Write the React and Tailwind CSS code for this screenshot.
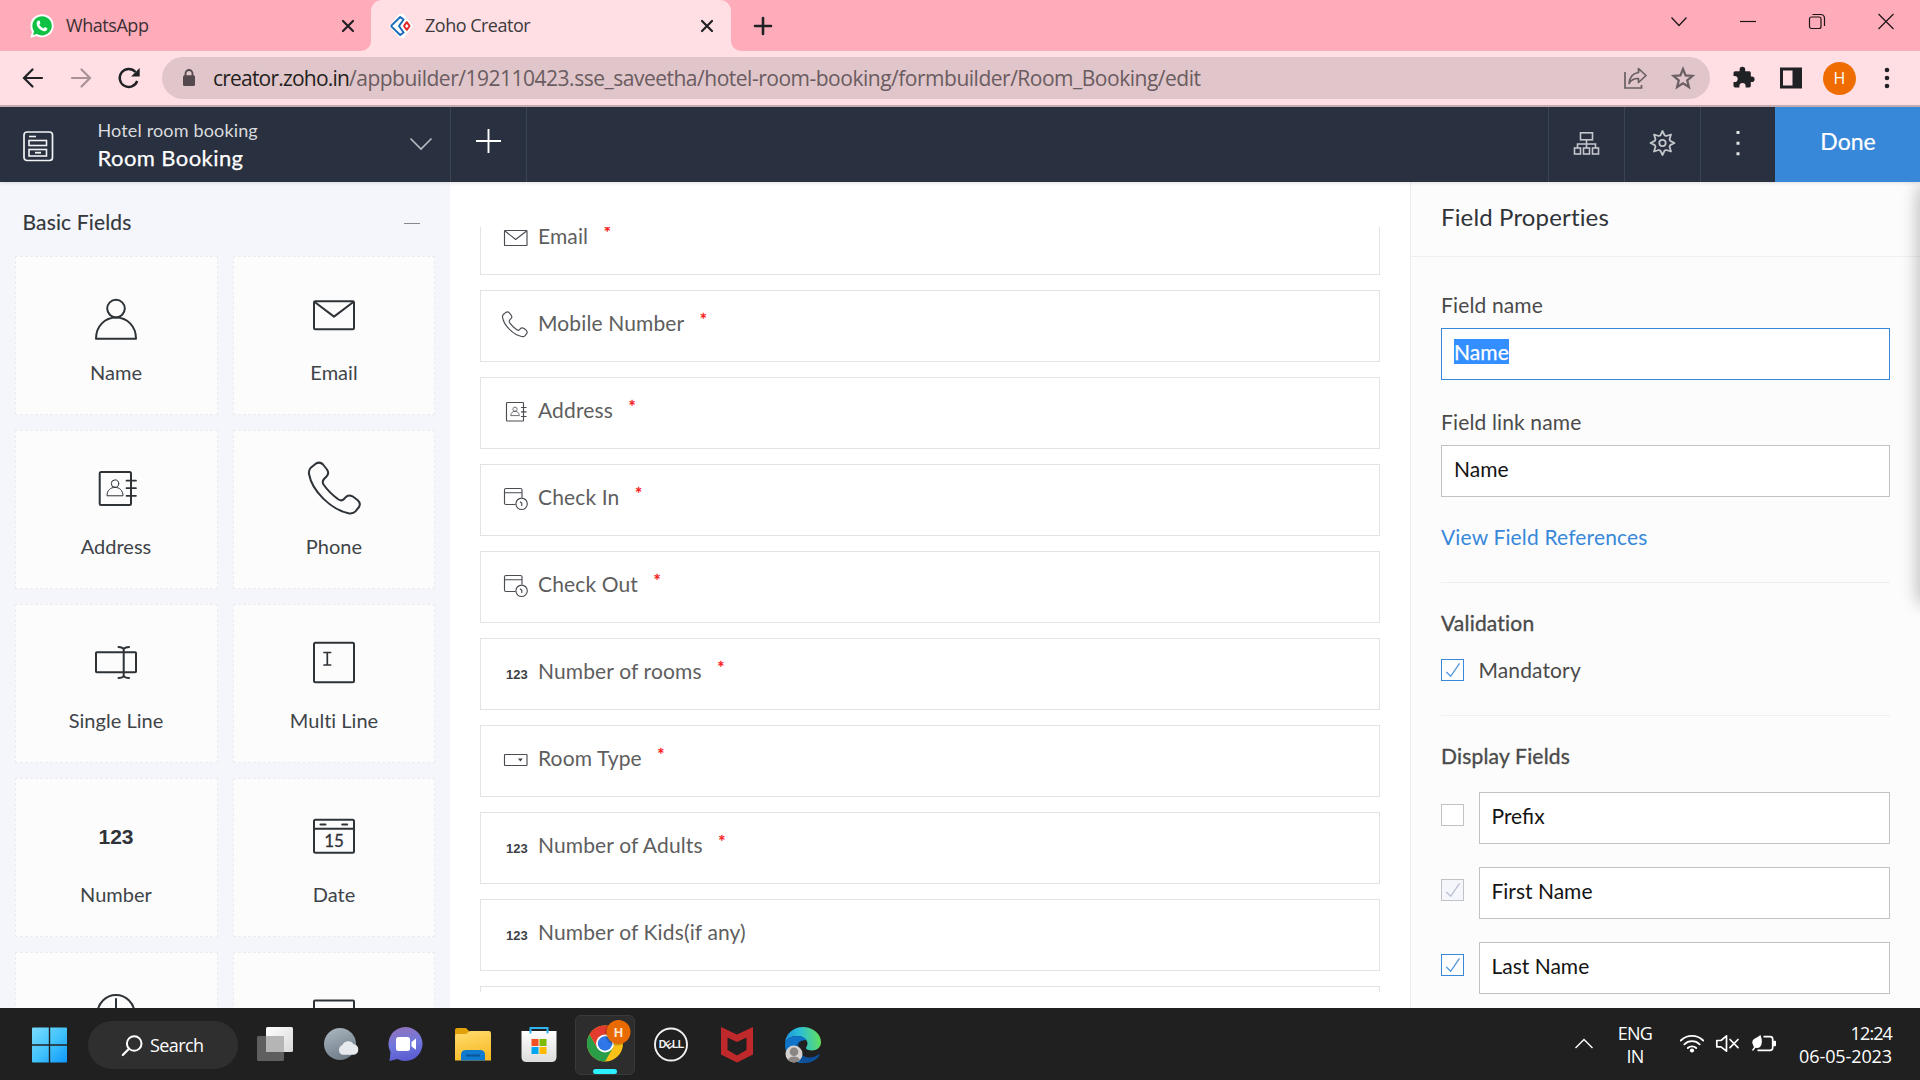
import React from 'react';

const PHONE =
  'M12 4.5C15 3 17.5 3.8 19 5.5L23 10.5C25 13.5 24.5 15.5 22.5 17.5L20 20C18.3 22 18.3 23.5 19.5 25.5C24 32 29 36.5 34.5 40.5C37 42 38.5 41.8 40 40L41.5 38.3C43.5 36 46 36 48.5 37.3L53.5 41C56 43.2 56.5 45.5 55 48L51.5 52.3C49.5 54.5 47.5 54.8 44.5 54.3C27 50.5 8 32 5 15C4.6 12.5 5 11 6.5 9Z';

function Svg({ w = 24, h = w, className = '', children }) {
  return (
    <svg width={w} height={h} viewBox={`0 0 ${w} ${h}`} fill="none" className={`shrink-0 ${className}`}>
      {children}
    </svg>
  );
}

/* ---------- Browser chrome ---------- */

function TabClose() {
  return (
    <Svg w={14}>
      <path d="M2 2L12 12M12 2L2 12" stroke="#202124" strokeWidth="2.2" strokeLinecap="round" />
    </Svg>
  );
}

function WhatsAppIcon() {
  return (
    <Svg w={24} h={24}>
      <path d="M12 0.3C18.8 0.3 23.7 5.4 23.7 11.8S18.6 23.3 12 23.3C10 23.3 8.2 22.8 6.6 22L0.3 23.8L2 17.9C0.9 16.1 0.4 14 0.4 11.8C0.4 5.4 5.4 0.3 12 0.3Z" fill="#fff" />
      <path d="M12 2.2C17.6 2.2 21.8 6.5 21.8 11.8S17.5 21.4 12 21.4C10.1 21.4 8.4 20.9 6.9 20L3 21.1L4.1 17.4C3 15.8 2.4 13.9 2.4 11.8C2.4 6.5 6.6 2.2 12 2.2Z" fill="#0ec143" />
      <path d="M8.4 6.6C9.3 6.3 9.7 6.8 10.2 8.4C10.6 9.5 9.8 9.9 9.3 10.6C10.2 12.4 11.5 13.6 13.4 14.4C14.2 13.7 14.6 12.9 15.5 13.3C17.6 14.3 17.5 14.5 17.1 15.6C16.5 17.1 14.9 17.6 13.3 17.1C9.7 16 7.4 13.5 6.7 10.5C6.4 8.8 7.2 7 8.4 6.6Z" fill="#fff" />
    </Svg>
  );
}

function ZohoIcon() {
  return (
    <Svg w={24} h={24}>
      <path d="M10.5 0.5L14.5 0.5L23.5 12L14.5 23.5H10.5L0.5 12Z" fill="#fff" stroke="#fff" strokeLinejoin="round" />
      <path d="M11.2 3L14.6 5.5L10 12L14.6 18.5L11.2 21L2.6 12.6Q2.2 12 2.6 11.4Z" stroke="#1b6cb8" strokeWidth="2" strokeLinejoin="round" />
      <path d="M17.8 8.2L20.6 12L17.8 15.8L15 12Z" stroke="#e42527" strokeWidth="2" strokeLinejoin="round" />
    </Svg>
  );
}

function TabStrip() {
  return (
    <div className="flex h-[51px] bg-[#ffacba]">
      <div className="flex w-[371px] items-center pl-[30px] pr-[16px]">
        <WhatsAppIcon />
        <span className="ml-[12px] grow text-[18px] tracking-[-0.45px] text-[#3b3034]">WhatsApp</span>
        <TabClose />
      </div>
      <div className="relative flex w-[360px] items-center rounded-t-[11px] bg-[#ffdee4] pl-[18px] pr-[17px]">
        <Svg w={10} className="absolute bottom-0 left-[-10px]">
          <path d="M0 10A10 10 0 0 0 10 0V10Z" fill="#ffdee4" />
        </Svg>
        <Svg w={10} className="absolute bottom-0 right-[-10px]">
          <path d="M10 10A10 10 0 0 1 0 0V10Z" fill="#ffdee4" />
        </Svg>
        <ZohoIcon />
        <span className="ml-[12px] grow text-[18px] tracking-[-0.5px] text-[#3c3a3c]">Zoho Creator</span>
        <TabClose />
      </div>
      <div className="flex grow items-center pl-[22px]">
        <Svg w={20}>
          <path d="M10 2V18M2 10H18" stroke="#202124" strokeWidth="2.6" strokeLinecap="round" />
        </Svg>
      </div>
      <div className="flex gap-[45px] pr-[22px] pt-[9px]">
        <Svg w={24}>
          <path d="M4.5 8.5L12 16.5L19.5 8.5" stroke="#1c1416" strokeWidth="1.2" />
        </Svg>
        <Svg w={24}>
          <path d="M4 12.5H20" stroke="#1c1416" strokeWidth="1.2" />
        </Svg>
        <Svg w={24}>
          <rect x="4.5" y="8" width="11.5" height="11.5" rx="2" stroke="#1c1416" strokeWidth="1.2" />
          <path d="M7.5 5.5H15.5Q19.5 5.5 19.5 9.5V17" stroke="#1c1416" strokeWidth="1.2" />
        </Svg>
        <Svg w={24}>
          <path d="M4.5 5L19.5 20M19.5 5L4.5 20" stroke="#1c1416" strokeWidth="1.2" />
        </Svg>
      </div>
    </div>
  );
}

function AddressBar() {
  return (
    <div className="flex h-[56px] items-center border-b-2 border-[#c8afb4] bg-[#ffdee4] pl-[20px]">
      <Svg w={26}>
        <path d="M22 13H4.5M12.5 4.5L4 13L12.5 21.5" stroke="#202124" strokeWidth="2.2" strokeLinecap="round" />
      </Svg>
      <Svg w={26} className="ml-[22px]">
        <path d="M4 13H21.5M13.5 4.5L22 13L13.5 21.5" stroke="#a99398" strokeWidth="2.2" strokeLinecap="round" />
      </Svg>
      <Svg w={26} className="ml-[22px]">
        <path d="M21.2 16A9 9 0 1 1 19.5 7" stroke="#202124" strokeWidth="2.4" />
        <path d="M23.7 3V11.6H15.1Z" fill="#202124" />
      </Svg>
      <div className="ml-[20px] flex h-[42px] w-[1548px] items-center rounded-full bg-[#e0c5ca] pl-[20px] pr-[15px]">
        <Svg w={14} h={20}>
          <path d="M3.5 8V5.5A3.5 3.5 0 0 1 10.5 5.5V8" stroke="#54494d" strokeWidth="1.8" />
          <rect x="1" y="7.3" width="12" height="10.7" rx="1.5" fill="#54494d" />
        </Svg>
        <span className="ml-[17px] mt-[2px] whitespace-nowrap text-[21px] tracking-[-0.49px] text-[#6a5c60]">
          <span className="tracking-[-0.8px] text-[#231f20]">creator.zoho.in</span>
          /appbuilder/192110423.sse_saveetha/hotel-room-booking/formbuilder/Room_Booking/edit
        </span>
        <div className="ml-auto flex gap-[24px]">
          <Svg w={24}>
            <path d="M2 6V22H18.5V19" stroke="#6a5f62" strokeWidth="1.7" />
            <path d="M15.5 2.5L23 9.5L15.5 16.5V12.5Q9 12.2 6 17.5Q7 7.5 15.5 6.5Z" stroke="#6a5f62" strokeWidth="1.7" strokeLinejoin="round" />
          </Svg>
          <Svg w={24}>
            <path d="M12 3L14.6 9.4L21.5 9.9L16.2 14.3L17.9 21L12 17.3L6.1 21L7.8 14.3L2.5 9.9L9.4 9.4Z" stroke="#6a5f62" strokeWidth="2.2" />
          </Svg>
        </div>
      </div>
      <Svg w={26} className="ml-[21px]">
        <path d="M2.5 9Q2.5 7.3 4.2 7.3H8.6V5.6A2.8 2.8 0 0 1 14.2 5.6V7.3H18.2Q19.8 7.3 19.8 9V12.4H20.8A2.8 2.8 0 0 1 20.8 18H19.8V21.8Q19.8 23.5 18.2 23.5H14.6V22.2A3.1 3.1 0 0 0 8.4 22.2V23.5H4.2Q2.5 23.5 2.5 21.8V18.1H3.6A3.1 3.1 0 0 0 3.6 11.9H2.5Z" fill="#202124" transform="translate(0 -1)" />
      </Svg>
      <Svg w={24} className="ml-[22px]">
        <path d="M1 1.5H23V22.5H1ZM4 4.5V19.5H13.5V4.5Z" fill="#202124" fillRule="evenodd" />
      </Svg>
      <div className="ml-[20px] flex size-[33px] items-center justify-center rounded-full bg-[#ef6c00] text-[16px] text-white">H</div>
      <Svg w={24} className="ml-[19px]">
        <circle cx="12" cy="4" r="2.3" fill="#202124" />
        <circle cx="12" cy="12" r="2.3" fill="#202124" />
        <circle cx="12" cy="20" r="2.3" fill="#202124" />
      </Svg>
    </div>
  );
}

/* ---------- Application header ---------- */

function AppHeader() {
  return (
    <div className="relative z-10 flex h-[75px] bg-[#29303f] font-['Lato',sans-serif] shadow-[0_1px_4px_rgba(0,0,0,0.12)]">
      <div className="flex w-[451px] items-center border-r border-[#3b4453] pl-[22px] pr-[17px]">
        <Svg w={32} className="mt-[3px]">
          <rect x="2" y="2" width="28.5" height="28.5" rx="3" stroke="#f1f2f4" strokeWidth="1.7" />
          <path d="M7 6.5H14" stroke="#f1f2f4" strokeWidth="1.6" />
          <rect x="7" y="10.5" width="17.5" height="5" stroke="#f1f2f4" strokeWidth="1.6" />
          <rect x="7" y="19.5" width="17.5" height="6.5" stroke="#f1f2f4" strokeWidth="1.6" />
          <path d="M13 22.7H19" stroke="#f1f2f4" strokeWidth="1.8" />
        </Svg>
        <div className="ml-[43.5px] mt-[-2px] grow">
          <div className="text-[18px] leading-[28px] tracking-[0.15px] text-[#d9dbde]">Hotel room booking</div>
          <div className="text-[22px] leading-[28px] tracking-[0.42px] text-white [-webkit-text-stroke:0.25px_#fff]">Room Booking</div>
        </div>
        <Svg w={24} className="mt-[-2px]">
          <path d="M1.5 6.5L12 17L22.5 6.5" stroke="#b8bbc1" strokeWidth="1.6" />
        </Svg>
      </div>
      <div className="flex w-[76px] justify-center border-r border-[#3b4453] pt-[20px]">
        <Svg w={28}>
          <path d="M13.5 2V26M1 14H26" stroke="#fff" strokeWidth="1.9" />
        </Svg>
      </div>
      <div className="ml-auto flex">
        <div className="flex w-[76px] justify-center border-l border-[#3b4453] pt-[23px]">
          <Svg w={28}>
            <g stroke="#c3c6cb" strokeWidth="1.6" transform="translate(-0.5 0)">
              <rect x="8" y="2.8" width="12" height="7" />
              <path d="M14 10V18M5 18V14H23V18" />
              <rect x="2" y="18" width="6" height="6" />
              <rect x="11" y="18" width="6" height="6" />
              <rect x="20" y="18" width="6" height="6" />
            </g>
          </Svg>
        </div>
        <div className="flex w-[76px] justify-center border-l border-[#3b4453] pt-[22px]">
          <Svg w={28}>
            <path
              d="M14 2L16.1 6.3L17.8 7L22.5 5.5L21 10.2L21.7 11.9L26 14L21.7 16.1L21 17.8L22.5 22.5L17.8 21L16.1 21.7L14 26L11.9 21.7L10.2 21L5.5 22.5L7 17.8L6.3 16.1L2 14L6.3 11.9L7 10.2L5.5 5.5L10.2 7L11.9 6.3Z"
              stroke="#c3c6cb"
              strokeWidth="1.8"
              strokeLinejoin="round"
              transform="translate(-0.5 0)"
            />
            <circle cx="13.5" cy="14" r="3.2" stroke="#c3c6cb" strokeWidth="1.8" />
          </Svg>
        </div>
        <div className="flex w-[75px] justify-center border-l border-[#3b4453] pt-[22px]">
          <Svg w={28}>
            <path d="M12.5 2H15.5V5H12.5ZM12.5 12.8H15.5V15.8H12.5ZM12.5 23.3H15.5V26.3H12.5Z" fill="#e4e5e7" />
          </Svg>
        </div>
        <div className="flex w-[145px] justify-center bg-[#3888da] pl-px pt-[19px] text-[23px] leading-[30px] text-white [-webkit-text-stroke:0.2px_#fff]">Done</div>
      </div>
    </div>
  );
}

/* ---------- Basic Fields palette ---------- */

const BIG = {
  name: (
    <>
      <circle cx="30" cy="23.6" r="8.8" />
      <path d="M10 53.8C10 41 19 32.6 30 32.6S50 41 50 53.8Z" />
    </>
  ),
  email: (
    <>
      <rect x="10" y="16.2" width="40" height="28" rx="1.2" />
      <path d="M11 17.2L30 31.6L49 17.2" />
    </>
  ),
  address: (
    <>
      <rect x="13.7" y="13" width="31.3" height="33" rx="1.5" />
      <path d="M40.5 21.7H50M40.5 29.2H50M40.5 36.8H50" strokeWidth="1.7" />
      <g strokeWidth="1">
        <circle cx="29" cy="24.6" r="3.7" />
        <path d="M21 36.4C21 31.4 24.5 28.4 29 28.4S37 31.4 37 36.4Z" />
      </g>
    </>
  ),
  phone: <path d={PHONE} />,
  single: (
    <>
      <rect x="10" y="19.3" width="40" height="20" rx="0.8" />
      <path d="M37.7 16V43M32.5 13.9Q36.5 13.9 37.7 16Q38.9 13.9 43 13.9M32.5 45Q36.5 45 37.7 43Q38.9 45 43 45" />
    </>
  ),
  multi: (
    <>
      <rect x="10" y="9.7" width="40" height="39.6" rx="1.5" />
      <path d="M23.3 19.5V32M20 19.5H26.6M20 32H26.6" strokeWidth="1.7" />
    </>
  ),
  number: (
    <text x="30" y="37" textAnchor="middle" fontSize="21" fontWeight="700" fontFamily="Liberation Sans" fill="#2e3338" stroke="none">
      123
    </text>
  ),
  date: (
    <>
      <rect x="10" y="12.8" width="40" height="33" rx="1.5" />
      <path d="M10 21.8H50M16.5 17.6H21.5M38.2 17.6H43.2" />
      <text x="30" y="39.8" textAnchor="middle" fontSize="17" fontFamily="Lato" fill="#2e3338" stroke="#2e3338" strokeWidth="0.3">
        15
      </text>
    </>
  ),
  time: (
    <>
      <circle cx="30" cy="32.5" r="18.5" />
      <path d="M30 18V32.5" />
    </>
  ),
  box: <rect x="10" y="19.5" width="40" height="24" rx="1" />,
};

const PALETTE = [
  ['name', 'Name'],
  ['email', 'Email'],
  ['address', 'Address'],
  ['phone', 'Phone'],
  ['single', 'Single Line'],
  ['multi', 'Multi Line'],
  ['number', 'Number'],
  ['date', 'Date'],
  ['time', ''],
  ['box', ''],
];

function Sidebar() {
  return (
    <div className="flex w-[450px] shrink-0 flex-col overflow-hidden bg-[#f4f6fb] pl-[15px] pr-[15px]">
      <div className="flex h-[74px] shrink-0 items-center pl-[7.5px] pr-[15px] pt-[6px]">
        <span className="grow text-[21px] tracking-[0.15px] text-[#33363a] [-webkit-text-stroke:0.15px_#33363a]">Basic Fields</span>
        <div className="mt-[2px] h-px w-[16px] bg-[#85888c]" />
      </div>
      <div className="grid shrink-0 grid-cols-[203px_202px] gap-[15px]">
        {PALETTE.map(([icon, label]) => (
          <div key={icon} className="flex h-[159px] flex-col items-center border border-dashed border-[#ececee] bg-[#fcfcfd] pt-[28px] odd:pr-px">
            <Svg w={60}>
              <g stroke="#2e3338" strokeWidth="2" strokeLinejoin="round" strokeLinecap="round">
                {BIG[icon]}
              </g>
            </Svg>
            <span className="mt-[15px] text-[20px] leading-[24px] tracking-[0.02px] text-[#404448]">{label}</span>
          </div>
        ))}
      </div>
    </div>
  );
}

/* ---------- Form canvas ---------- */

const SMALL = {
  email: (
    <>
      <rect x="3.5" y="8.5" width="22.5" height="15" rx="0.6" />
      <path d="M4 9L14.7 17.5L25.5 9" />
    </>
  ),
  phone: <path d={PHONE} transform="translate(-0.9 1.2) scale(0.485)" strokeWidth="2.4" />,
  address: (
    <>
      <rect x="5.5" y="6.5" width="17" height="18.5" rx="0.8" />
      <path d="M20 11.5H25.5M20 15.8H25.5M20 20.5H25.5" />
      <g strokeWidth="0.8">
        <circle cx="14" cy="13.2" r="2.1" />
        <path d="M9.7 19.6C9.7 17 11.5 15.4 14 15.4S18.3 17 18.3 19.6Z" />
      </g>
    </>
  ),
  datetime: (
    <>
      <path d="M14.5 21.5H5Q3.5 21.5 3.5 20V7Q3.5 5.5 5 5.5H19.5Q21 5.5 21 7V14.5M3.5 9.7H21" />
      <circle cx="20.6" cy="20.8" r="5.7" />
      <path d="M19 18.8L20.8 20.3V23" />
    </>
  ),
  number: (
    <text x="15.8" y="22" textAnchor="middle" fontSize="13" fontWeight="700" fontFamily="Liberation Sans" fill="#3d4146" stroke="none">
      123
    </text>
  ),
  dropdown: (
    <>
      <rect x="3.5" y="10.5" width="22.5" height="11" rx="0.4" />
      <path d="M17 14.6H21.8L19.4 17.4Z" fill="#3d4146" stroke="none" />
    </>
  ),
};

const FIELDS = [
  ['email', 'Email', true],
  ['phone', 'Mobile Number', true],
  ['address', 'Address', true],
  ['datetime', 'Check In', true],
  ['datetime', 'Check Out', true],
  ['number', 'Number of rooms', true],
  ['dropdown', 'Room Type', true],
  ['number', 'Number of Adults', true],
  ['number', 'Number of Kids(if any)', false],
];

function Canvas() {
  return (
    <div className="grow bg-white pb-[16px] pl-[30px] pr-[30px] pt-[45px]">
      <div className="flex h-full flex-col overflow-hidden">
        <div className="mt-[-24px] flex flex-col gap-[15px]">
          {FIELDS.map(([icon, label, required]) => (
            <div key={label} className="flex h-[72px] shrink-0 border border-[#e3e3e4] bg-white pl-[20px] pt-[18px]">
              <Svg w={30}>
                <g stroke="#4a4d52" strokeWidth="1.15" strokeLinejoin="round">
                  {SMALL[icon]}
                </g>
              </Svg>
              <span className="ml-[7px] mt-[2px] text-[21px] leading-[24px] tracking-[0.13px] text-[#5e5e5e]">{label}</span>
              {required && (
                <span className="ml-[15.5px] mt-[-1px] text-[17px] leading-[24px] text-[#fb0f0f] [-webkit-text-stroke:0.3px_#fb0f0f]">*</span>
              )}
            </div>
          ))}
          <div className="h-[72px] shrink-0 border border-[#e3e3e4] bg-white" />
        </div>
      </div>
    </div>
  );
}

/* ---------- Field properties ---------- */

function Checkbox({ state }) {
  const tone = { on: 'border-[#3888da] bg-white', off: 'border-[#c0c2c8] bg-white', locked: 'border-[#c0c2c8] bg-[#f4f6fb]' }[state];
  return (
    <div className={`flex h-[22px] w-[23px] shrink-0 items-center justify-center border ${tone}`}>
      {state !== 'off' && (
        <Svg w={18}>
          <path d="M2.3 11L6.7 15.3L15.5 2.3" stroke={state === 'on' ? '#4f97e2' : '#b9bfd2'} strokeWidth="1.3" />
        </Svg>
      )}
    </div>
  );
}

const INPUT = 'flex h-[52px] items-center border bg-white pb-[5px] text-[21px] leading-[25px] text-[#141414]';

function Properties() {
  return (
    <div className="relative flex w-[510px] shrink-0 flex-col overflow-hidden border-l border-[#ebecf2] bg-[#fcfcfc] text-[#4a4a4a]">
      <div className="absolute right-[-14px] top-[6px] h-[414px] w-[14px] rounded-full shadow-[0_0_16px_4px_rgba(0,0,0,0.22)]" />
      <div className="h-[75px] border-b border-[#eeeff0] pl-[30px] pt-[20px] text-[24px] leading-[30px] tracking-[0.15px] text-[#303338]">
        Field Properties
      </div>
      <div className="flex flex-col pl-[30px] pr-[30px] pt-[36px] text-[21px] leading-[24px]">
        <span className="tracking-[0.14px]">Field name</span>
        <div className={`mt-[11px] border-[#3888da] pl-[12px] ${INPUT}`}>
          <span className="w-[55px] bg-[#338fff] tracking-[0.1px] text-white [-webkit-text-stroke:0.25px_#fff]">Name</span>
        </div>
        <span className="mt-[30px] tracking-[0.14px]">Field link name</span>
        <div className={`mt-[11px] border-[#c0c2c4] pl-[12px] ${INPUT}`}>Name</div>
        <span className="mt-[28px] tracking-[0.15px] text-[#3888da]">View Field References</span>
        <div className="mt-[33px] h-px bg-[#eeeff0]" />
        <span className="mt-[28px] tracking-[0.2px] [-webkit-text-stroke:0.35px_#4a4a4a]">Validation</span>
        <div className="mt-[23px] flex items-center gap-[14.5px]">
          <Checkbox state="on" />
          <span className="tracking-[0.12px]">Mandatory</span>
        </div>
        <div className="mt-[33px] h-px bg-[#eeeff0]" />
        <span className="mt-[28px] tracking-[0.2px] [-webkit-text-stroke:0.35px_#4a4a4a]">Display Fields</span>
        <div className="mt-[24px] flex flex-col gap-[23px]">
          {[
            ['Prefix', 'off'],
            ['First Name', 'locked'],
            ['Last Name', 'on'],
          ].map(([label, state]) => (
            <div key={label} className="flex items-start gap-[15px]">
              <div className="pt-[12px]">
                <Checkbox state={state} />
              </div>
              <div className={`grow border-[#c0c2c4] pl-[11.5px] ${INPUT}`}>{label}</div>
            </div>
          ))}
        </div>
      </div>
    </div>
  );
}

/* ---------- Taskbar ---------- */

const TASK_ICONS = {
  taskview: (
    <>
      <rect x="10" y="1" width="27" height="25" rx="1.5" fill="url(#tvW)" />
      <rect x="1" y="10" width="27" height="25" rx="1.5" fill="#6b6b6b" fillOpacity="0.85" />
      <rect x="10" y="10" width="18" height="16" fill="#b5b5b5" />
    </>
  ),
  weather: (
    <>
      <circle cx="18" cy="18" r="16" fill="url(#moon)" />
      <path d="M21 29A5 5 0 0 1 20.5 19.5A6.5 6.5 0 0 1 32 18.5A5.3 5.3 0 0 1 32 29Z" fill="#e6eaed" transform="translate(-0.3 -0.3)" />
    </>
  ),
  chat: (
    <>
      <path d="M18 1A17 17 0 1 1 9.5 33L1.5 35L2.5 26A17 17 0 0 1 18 1Z" fill="url(#chatG)" />
      <rect x="8" y="11" width="14" height="14" rx="2.5" fill="#fff" />
      <path d="M23.5 16L28 12.5V23.8L23.5 20.5Z" fill="#fff" />
    </>
  ),
  folder: (
    <>
      <path d="M1 4Q1 2 3 2H12L16 6H33V18H1Z" fill="#e0a10a" />
      <path d="M1 10Q1 8 3 8H12L16 5H35Q37 5 37 7V34.5H1Z" fill="url(#foldG)" />
      <path d="M7 34.5V29Q7 24 12 24H26Q31 24 31 29V34.5Z" fill="#0f7bd0" />
      <path d="M12 29.5H26" stroke="#0b5596" strokeWidth="2" />
    </>
  ),
  store: (
    <>
      <path d="M1.5 5H36.5V31Q36.5 36 31.5 36H6.5Q1.5 36 1.5 31Z" fill="url(#storeG)" />
      <path d="M10.5 7.5V2H27.5V7.5" stroke="#2fb4ee" strokeWidth="2" />
      <path d="M11.5 13H18.5V20H11.5Z" fill="#f25022" />
      <path d="M19.5 13H26.5V20H19.5Z" fill="#7fba00" />
      <path d="M11.5 21H18.5V28H11.5Z" fill="#00a4ef" />
      <path d="M19.5 21H26.5V28H19.5Z" fill="#ffb900" />
    </>
  ),
  dell: (
    <>
      <circle cx="19" cy="18.5" r="16" stroke="#f2f2f2" strokeWidth="1.9" />
      <g fontSize="10.5" fontWeight="700" fontFamily="Liberation Sans" fill="#f2f2f2" textAnchor="middle">
        <text x="10.5" y="22.3">D</text>
        <text x="17" y="22.3" transform="rotate(-38 17 18.6)">E</text>
        <text x="23.3" y="22.3">L</text>
        <text x="28.9" y="22.3">L</text>
      </g>
    </>
  ),
  mcafee: (
    <path d="M3 1L19 8.5L35 1V28.5L19 36.5L3 28.5ZM9.5 11.5V24L19 29.5L28.5 24V11.5L19 16Z" fill="#c0292c" fillRule="evenodd" />
  ),
  edge: (
    <>
      <path d="M1 17C1.5 8 9 1 19 1C29 1 37 8 37 16C37 21.5 33 24.5 28 24.5C24.5 24.5 22 23.5 22 22C22 21 23.5 20 23.5 17.5C23.5 13.5 19 10 13 10C7 10 2.5 13 1 17Z" fill="url(#edgeA)" />
      <path d="M1 19C1 13.5 6.5 10 13 10C17 10 20.5 11.5 22.5 14C15 14 12.5 18 13 22.5C13.8 30 21 35 28 33.5C25.5 35.5 22 37 19 37C9 37 1 29 1 19Z" fill="#0f74c9" />
      <path d="M15 17C12.5 24 17 31.5 25.5 31.5C29.5 31.5 32.5 30 34.5 28.5C35.3 28 36 28.7 35.5 29.4C32 34.5 26 37 20.5 37C12 36 7 27 11 20.5C12 18.8 13.5 17.5 15 17Z" fill="#0c4f9b" />
      <circle cx="10" cy="28" r="8.5" fill="#d5d1ce" />
      <circle cx="10" cy="25.7" r="4.3" fill="#8b8683" />
      <path d="M4 34A6.5 5.5 0 0 1 16 34A8.5 8.5 0 0 1 4 34Z" fill="#8b8683" />
    </>
  ),
};

function ChromeIcon() {
  return (
    <>
      <circle cx="20" cy="20" r="18" fill="#fbc116" />
      <path d="M4.4 11A18 18 0 0 1 35.6 11H20L12.2 24.5Z" fill="#e33b2e" />
      <path d="M4.4 11A18 18 0 0 0 20 38L27.8 24.5H12.2Z" fill="#2a9d48" />
      <circle cx="20" cy="20" r="9" fill="#fff" />
      <circle cx="20" cy="20" r="7.2" fill="#2f77e8" />
    </>
  );
}

function Slot({ children }) {
  return <div className="flex w-[60px] items-center justify-center">{children}</div>;
}

function Taskbar() {
  return (
    <div className="flex h-[72px] bg-[#202020] pt-[2px] text-white">
      <svg width="0" height="0" className="absolute">
        <defs>
          <linearGradient id="win" x1="0" y1="0" x2="38" y2="38" gradientUnits="userSpaceOnUse">
            <stop stopColor="#7fdcff" />
            <stop offset="0.5" stopColor="#43c4fb" />
            <stop offset="1" stopColor="#0a94fb" />
          </linearGradient>
          <linearGradient id="tvW" x1="0" y1="0" x2="1" y2="1">
            <stop stopColor="#ffffff" />
            <stop offset="1" stopColor="#d8d8d8" />
          </linearGradient>
          <linearGradient id="moon" x1="0.2" y1="0" x2="0.6" y2="1">
            <stop stopColor="#a9b4bd" />
            <stop offset="1" stopColor="#6f7d89" />
          </linearGradient>
          <linearGradient id="chatG" x1="0.3" y1="0" x2="0.5" y2="1">
            <stop stopColor="#9173bd" />
            <stop offset="0.5" stopColor="#7078dd" />
            <stop offset="1" stopColor="#5a5bd0" />
          </linearGradient>
          <linearGradient id="foldG" x1="0" y1="0" x2="0.3" y2="1">
            <stop stopColor="#ffdc70" />
            <stop offset="1" stopColor="#f9bd2a" />
          </linearGradient>
          <linearGradient id="storeG" x1="0" y1="0" x2="0" y2="1">
            <stop stopColor="#ffffff" />
            <stop offset="1" stopColor="#dcdcdc" />
          </linearGradient>
          <linearGradient id="edgeA" x1="0" y1="0.6" x2="1" y2="0.5">
            <stop stopColor="#1a8fe0" />
            <stop offset="0.45" stopColor="#2cbfd6" />
            <stop offset="1" stopColor="#63e05a" />
          </linearGradient>
        </defs>
      </svg>
      <div className="ml-[20px] flex w-[60px] items-center justify-center">
        <Svg w={38}>
          <path d="M2.5 1.5H18.3V18.3H1.5V2.5Q1.5 1.5 2.5 1.5ZM19.7 1.5H35.5Q36.5 1.5 36.5 2.5V18.3H19.7ZM1.5 19.7H18.3V36.5H2.5Q1.5 36.5 1.5 35.5ZM19.7 19.7H36.5V35.5Q36.5 36.5 35.5 36.5H19.7Z" fill="url(#win)" transform="translate(-0.5 0)" />
        </Svg>
      </div>
      <div className="ml-[8px] mt-[11px] flex h-[48px] w-[150px] items-center rounded-full bg-[#2f2f2f] pl-[32px]">
        <Svg w={24}>
          <circle cx="14.2" cy="10.5" r="7.3" stroke="#fff" strokeWidth="2" />
          <path d="M9 15.7L2.8 22" stroke="#fff" strokeWidth="2.2" strokeLinecap="round" />
        </Svg>
        <span className="ml-[6px] text-[18px] tracking-[-0.6px]">Search</span>
      </div>
      <div className="ml-[7px] flex gap-[6px]">
        {['taskview', 'weather', 'chat', 'folder', 'store'].map((id) => (
          <Slot key={id}>
            <Svg w={38}>{TASK_ICONS[id]}</Svg>
          </Slot>
        ))}
        <div className="mt-[5px] flex h-[60px] w-[60px] flex-col items-center rounded-[6px] border border-[#3a3a3a] bg-[#2d2d2d]">
          <Svg w={46} h={42} className="ml-[7px] mt-[4px]">
            <g transform="translate(-1 -0.5)">
              <g transform="translate(0 4)">
                <ChromeIcon />
              </g>
              <circle cx="32" cy="14" r="12" fill="#000" fillOpacity="0.2" />
              <circle cx="33.5" cy="12.5" r="12" fill="#e86a00" />
              <text x="33.5" y="17.2" textAnchor="middle" fontSize="13" fontWeight="700" fontFamily="Open Sans" fill="#fde5cf">
                H
              </text>
            </g>
          </Svg>
          <div className="mt-[7px] h-[5px] w-[24px] rounded-full bg-[#2cefff]" />
        </div>
        {['dell', 'mcafee', 'edge'].map((id) => (
          <Slot key={id}>
            <Svg w={38}>{TASK_ICONS[id]}</Svg>
          </Slot>
        ))}
      </div>
      <div className="ml-auto flex items-center pr-[28px] text-[18px] leading-[23px]">
        <Svg w={22} className="mt-[-2px]">
          <path d="M2.5 15L11 6.5L19.5 15" stroke="#fff" strokeWidth="1.4" />
        </Svg>
        <div className="ml-[22px] w-[36px] text-center tracking-[-0.7px]">
          <div>ENG</div>
          <div>IN</div>
        </div>
        <Svg w={28} className="ml-[25px] mt-[-2px]">
          <g stroke="#fff" strokeWidth="1.8" strokeLinecap="round">
            <path d="M2.8 10.5A16 16 0 0 1 25.2 10.5" />
            <path d="M6.3 14.3A11 11 0 0 1 21.7 14.3" />
            <path d="M9.8 18A6 6 0 0 1 18.2 18" />
          </g>
          <circle cx="14" cy="20.5" r="2.1" fill="#fff" />
        </Svg>
        <Svg w={28} className="ml-[8px] mt-[-2px]">
          <path d="M2.8 10.5H7L12.5 5.8V21.2L7 16.8H2.8Z" stroke="#fff" strokeWidth="1.7" strokeLinejoin="round" />
          <path d="M16 9.5L24 17.7M24 9.5L16 17.7" stroke="#fff" strokeWidth="1.7" strokeLinecap="round" />
        </Svg>
        <Svg w={28} className="ml-[8px] mt-[-2px]">
          <path d="M13.5 6.7H20Q22.7 6.7 22.7 9.3V17.7Q22.7 20.3 20 20.3H7.5" stroke="#fff" strokeWidth="1.7" />
          <path d="M23 10.8H25.2Q26 10.8 26 12V15Q26 16.2 25.2 16.2H23Z" fill="#fff" />
          <path d="M10.5 5Q13.5 13 10 17Q8 18.5 5.5 17.8L3 21L2 20L4 17Q0.5 11.5 4 9Q8 7 10.5 5Z" fill="#fff" />
        </Svg>
        <div className="ml-[20px] w-[94px] text-right">
          <div className="tracking-[-0.9px]">12:24</div>
          <div className="whitespace-nowrap tracking-[-0.1px]">06-05-2023</div>
        </div>
      </div>
    </div>
  );
}

export default function App() {
  return (
    <div className="flex h-[1080px] w-[1920px] flex-col overflow-hidden bg-white font-['Open_Sans',sans-serif]">
      <TabStrip />
      <AddressBar />
      <AppHeader />
      <div className="flex h-[826px] font-['Lato',sans-serif]">
        <Sidebar />
        <Canvas />
        <Properties />
      </div>
      <Taskbar />
    </div>
  );
}
